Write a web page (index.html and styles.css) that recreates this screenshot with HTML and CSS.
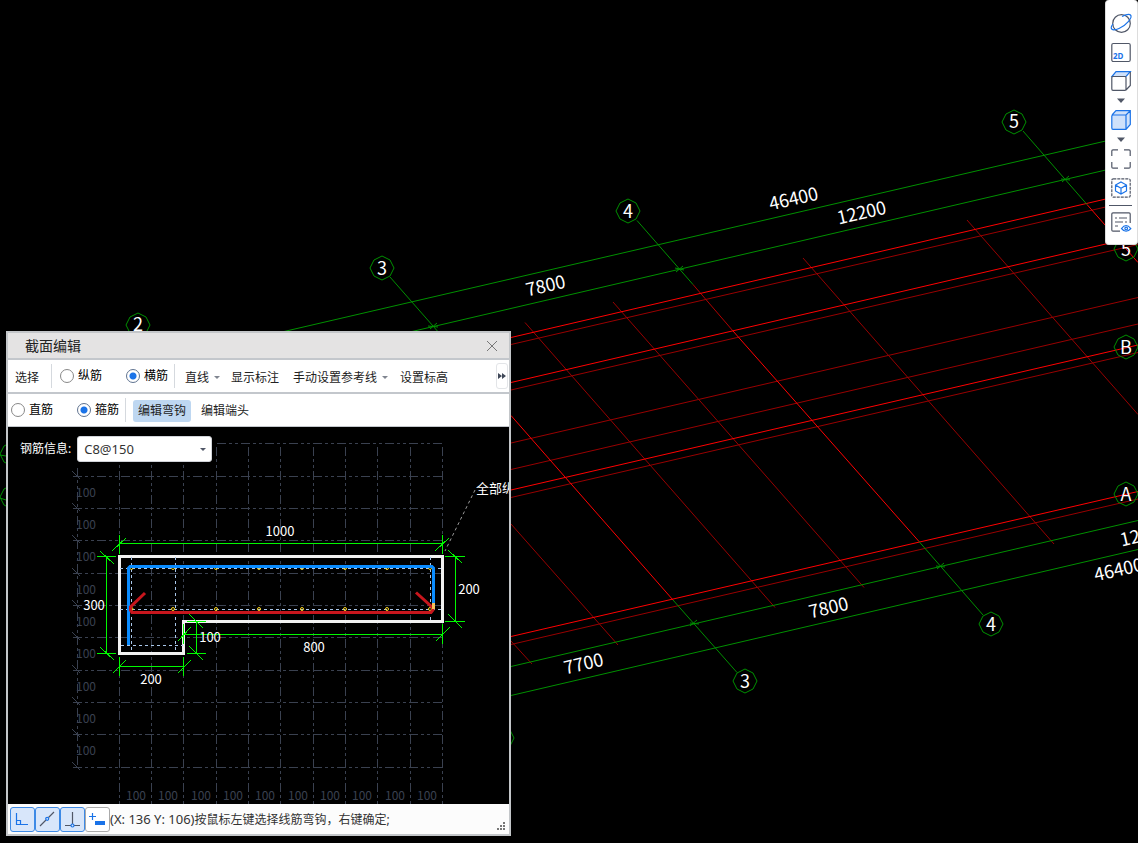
FILE: index.html
```html
<!DOCTYPE html>
<html lang="zh-CN">
<head>
<meta charset="utf-8">
<title>截面编辑</title>
<link rel="stylesheet" href="styles.css">
</head>
<body>
<main class="workspace">
  <svg class="model" role="img" aria-label="轴网">
    <defs>
      <path id="bubble" d="M0-12 8-8 12 0 8 8 0 12-8 8-12 0-8-8Z"/>
    </defs>
    <g class="beam">
      <path d="M511 344.5 1138 199.5M511 390 1138 244.500M511 443 1138 297.500M511 469.500 1138 324M511 497.500 1138 352.500M511 644.500 1138 499"/>
      <path d="M525 322.500 775 607.500M613 302 864 587.500M803 258 1054 544M967 220 1138 414.500M511 524 618 645M511 641 532 664"/>
    </g>
    <path class="beam-mid" d="M693 284.500 733 331"/>
    <path class="axis" d="M511 337.500 1138 191.500M511 382.500 1138 236.500M511 490 1138 345M511 636.500 1138 491.500M733 331 919 541.500M511 415.500 673 600M1087 204.500 1138 262.500"/>
    <path class="dim" d="M284 331.500 1138 133.500M412 331.500 1138 162.500M511 666.500 1138 520.500M511 695.500 1138 549.500M637 220.500 693 284.500M919 541.500 983 615M390 277 440 334M673 600 737 672.500M1023 131 1087 204.500M676 272 683 266M675 268 684 270M937 569 944 563M936 566 945 567M690 626 697 620M690 623 699 624M1062 182 1069 176M1061 179 1070 180M430 329 437 323M428 326 438 327M0 455 6 456M0 498 6 500"/>
    <g class="bubbles">
      <use href="#bubble" x="138" y="325"/>
      <use href="#bubble" x="382" y="268"/>
      <use href="#bubble" x="628" y="211"/>
      <use href="#bubble" x="1014" y="122"/>
      <use href="#bubble" x="1126" y="249"/>
      <use href="#bubble" x="1126" y="347"/>
      <use href="#bubble" x="1126" y="494"/>
      <use href="#bubble" x="745" y="681"/>
      <use href="#bubble" x="991" y="624"/>
      <use href="#bubble" x="502" y="738"/>
      <use href="#bubble" x="12" y="454"/>
      <use href="#bubble" x="12" y="497"/>
    </g>
    <g class="axis-text">
      <text x="138" y="331">2</text>
      <text x="382" y="275">3</text>
      <text x="628" y="218">4</text>
      <text x="1014" y="128">5</text>
      <text x="1126" y="256">5</text>
      <text x="1126" y="354">B</text>
      <text x="1126" y="501">A</text>
      <text x="745" y="688">3</text>
      <text x="991" y="631">4</text>
      <text transform="translate(547 292) rotate(-13)">7800</text>
      <text transform="translate(795 205) rotate(-13)">46400</text>
      <text transform="translate(863 219) rotate(-13)">12200</text>
      <text transform="translate(585 670) rotate(-13)">7700</text>
      <text transform="translate(830 614) rotate(-13)">7800</text>
      <text transform="translate(1146 541) rotate(-13)">12200</text>
      <text transform="translate(1120 576) rotate(-13)">46400</text>
    </g>
  </svg>

  <nav class="view-tools" aria-label="视图">
    <button class="tool" aria-label="动态观察"><svg viewBox="0 0 20 20"><circle class="ink" cx="10.500" cy="10.500" r="8.800"/><path class="blue" d="M2 11C-2 16 1 18.500 8 15.500 15 12.500 22 4.500 19.500 2 18 .500 14 2 11 3.500"/></svg></button>
    <button class="tool" aria-label="二维"><svg viewBox="0 0 20 20"><rect class="ink" x=".8" y="1.500" width="18.400" height="18" rx="1.500"/><text class="two-d" x="2" y="17">2D</text></svg></button>
    <button class="tool" aria-label="俯视"><svg viewBox="0 0 20 20"><path class="sky" d="M1 5.500 5 .700H19.300L15 5.500Z"/><path class="ink" d="M2 5.500H14Q15 5.500 15 6.500V18Q15 19.300 14 19.300H2Q.8 19.300 .8 18V6.500Q.8 5.500 2 5.500ZM19.300 1V14.500L15 19"/></svg></button>
    <button class="arrow" aria-label="俯视选项"><svg viewBox="0 0 8 5"><path d="M0 .500H8L4 5Z"/></svg></button>
    <button class="tool" aria-label="实体"><svg viewBox="0 0 20 20"><path class="solid" d="M1 5 5 .700H19.300V14.500L15 19.300H2Q.8 19.300 .8 18V6Q.8 5 2 5H15V19.300M15 5 19.300 .700"/></svg></button>
    <button class="arrow" aria-label="实体选项"><svg viewBox="0 0 8 5"><path d="M0 .500H8L4 5Z"/></svg></button>
    <button class="tool" aria-label="全屏"><svg viewBox="0 0 20 20"><path class="ink" d="M7 .800H2Q.8.800.8 2V7M13 .800H18Q19.200.800 19.200 2V7M19.200 13V18Q19.200 19.200 18 19.200H13M7 19.200H2Q.8 19.200.8 18V13"/></svg></button>
    <button class="tool" aria-label="局部三维"><svg viewBox="0 0 20 20"><rect class="ink dotted" x=".8" y=".8" width="18.400" height="18.400" rx="1.500"/><path class="blue" d="M10 4 15.500 7V13L10 16 4.500 13V7ZM4.500 7 10 10.300 15.500 7M10 10.300V16"/></svg></button>
    <hr class="tool-rule">
    <button class="tool" aria-label="显示设置"><svg viewBox="0 0 20 20"><path class="ink" d="M9 19.200H2Q.8 19.200.8 18V2Q.8.800 2 .800H18Q19.200.800 19.200 2V11M4 6H6M8 6H16M4 10H12M14 10H16M4 14H7"/><path class="blue" d="M10.500 16.500Q15 10.500 19.800 16.500 15 22 10.500 16.500Z"/><circle class="blue" cx="15.200" cy="16.500" r="1.300"/></svg></button>
  </nav>

  <section class="dialog" aria-label="截面编辑">
    <header class="title-bar">
      <h1>截面编辑</h1>
      <button class="close" aria-label="关闭"><svg viewBox="0 0 12 12"><path d="M1 1 11 11M11 1 1 11"/></svg></button>
    </header>
    <div class="bar main-bar">
      <button class="command">选择</button>
      <span class="rule"></span>
      <label class="choice"><input type="radio" name="bar-type">纵筋</label>
      <label class="choice"><input type="radio" name="bar-type" checked>横筋</label>
      <span class="rule"></span>
      <button class="command drop outlined">直线<i class="caret"></i></button>
      <button class="command">显示标注</button>
      <button class="command drop">手动设置参考线<i class="caret"></i></button>
      <button class="command">设置标高</button>
      <button class="more" aria-label="更多"><svg viewBox="0 0 8 6"><path d="M0 0 4 3 0 6ZM4 0 8 3 4 6Z"/></svg></button>
    </div>
    <div class="bar sub-bar">
      <label class="choice"><input type="radio" name="rebar">直筋</label>
      <label class="choice"><input type="radio" name="rebar" checked>箍筋</label>
      <span class="rule"></span>
      <button class="command selected">编辑弯钩</button>
      <button class="command">编辑端头</button>
    </div>
    <div class="canvas">
      <svg class="drawing" role="img" aria-label="截面">
        <g transform="translate(-8 -427)">
          <g class="grid">
            <path d="M119.500 447V804M151.500 447V804M183.500 447V804M216.500 447V804M248.500 447V804M280.500 447V804M313.500 447V804M345.500 447V804M377.500 447V804M410.500 447V804M442.500 447V804M77.500 468V768"/>
            <path d="M217 443.500H442M73 476.500H442M73 508.500H442M73 540.500H442M73 573.500H442M73 605.500H442M73 637.500H442M73 670.500H442M73 702.500H442M73 734.500H442M73 767.500H442"/>
          </g>
          <path class="ticks" d="M72 471 80 479M72 503 80 511M72 535 80 543M72 568 80 576M72 600 80 608M72 632 80 640M72 665 80 673M72 697 80 705M72 729 80 737M72 762 80 770"/>
          <g class="grid-text">
            <text x="86" y="497">100</text><text x="86" y="529">100</text><text x="86" y="561">100</text><text x="86" y="594">100</text><text x="86" y="626">100</text><text x="86" y="658">100</text><text x="86" y="691">100</text><text x="86" y="723">100</text><text x="86" y="755">100</text>
            <text x="136" y="800">100</text><text x="168" y="800">100</text><text x="201" y="800">100</text><text x="233" y="800">100</text><text x="265" y="800">100</text><text x="298" y="800">100</text><text x="330" y="800">100</text><text x="362" y="800">100</text><text x="395" y="800">100</text><text x="427" y="800">100</text>
          </g>
          <path class="outline" d="M119.500 556.500H442.500V621.500H183.500V653.500H119.500Z"/>
          <path class="guide" d="M120 568.500H442M120 609.500H442M121 645.500H183M131.500 557V653M175.500 557V653M430.500 557V622"/>
          <g class="dots">
            <circle cx="131.500" cy="568" r="1.500"/><circle cx="173" cy="568" r="1.500"/><circle cx="216" cy="568" r="1.500"/><circle cx="259" cy="568" r="1.500"/><circle cx="302" cy="568" r="1.500"/><circle cx="345" cy="568" r="1.500"/><circle cx="387" cy="568" r="1.500"/><circle cx="430" cy="568" r="1.500"/>
            <circle cx="131.500" cy="609" r="1.500"/><circle cx="173" cy="609" r="1.500"/><circle cx="216" cy="609" r="1.500"/><circle cx="259" cy="609" r="1.500"/><circle cx="302" cy="609" r="1.500"/><circle cx="345" cy="609" r="1.500"/><circle cx="387" cy="609" r="1.500"/><circle cx="430" cy="609" r="1.500"/>
          </g>
          <path class="bar-blue" d="M128.500 645V568L130 566.500H432L433.500 568V604"/>
          <path class="bar-red" d="M145 593 130.500 607V610L132 612.500H431L433 610V608L416 592.500"/>
          <path class="bar-amber" d="M433.500 603V609"/>
          <path class="measure" d="M119 543.500H443M119.500 535V554M442.500 535V554M112 551 126 538M435 551 449 538M106.500 556V654M97 556.500H116M97 653.500H116M100 551 114 564M100 647 114 660M119 666.500H184M119.500 657V676M183.500 657V676M113 673 126 660M178 673 191 660M183 634.500H443M183.500 624V644M442.500 624V644M178 641 191 627M436 641 450 627M196.500 621V654M187 621.500H206M187 653.500H206M189 614 203 628M189 646 203 660M455.500 556V622M445 556.500H465M445 621.500H465M448 550 462 563M448 614 462 628"/>
          <path class="leader" d="M475 490 445 551"/>
          <g class="measure-text">
            <text x="280" y="536">1000</text><text x="94" y="610">300</text><text x="151" y="684">200</text><text x="210" y="642">100</text><text x="314" y="652">800</text><text x="469" y="594">200</text>
          </g>
          <text class="note" x="476" y="493">全部纵筋</text>
        </g>
      </svg>
      <label class="rebar-info">钢筋信息:
        <span class="combo"><select><option>C8@150</option></select><i class="caret"></i></span>
      </label>
    </div>
    <footer class="status">
      <button class="snap on" aria-label="正交"><svg viewBox="0 0 23 23"><path class="blue" d="M5.500 5V16.500H17M5.500 12.500H9.500V16.500"/></svg></button>
      <button class="snap on" aria-label="极轴"><svg viewBox="0 0 23 23"><path class="ink" d="M4 18 10 12M12.500 9.500 18 4"/><circle class="blue" cx="11.200" cy="10.800" r="1.500"/></svg></button>
      <button class="snap on" aria-label="垂足"><svg viewBox="0 0 23 23"><path class="ink" d="M11.500 4V16M4 17.500H10M13 17.500H19"/><circle class="blue" cx="11.500" cy="17.500" r="1.500"/></svg></button>
      <button class="snap" aria-label="动态输入"><svg viewBox="0 0 23 23"><path class="blue" d="M3 8.500H10M6.500 5V12"/><rect class="fill-blue" x="9" y="13" width="10" height="4"/></svg></button>
      <span class="message"><span class="latin">(X: 136 Y: 106)</span>按鼠标左键选择线筋弯钩，右键确定;</span>
      <svg class="grip" viewBox="0 0 8 8"><path d="M6 0H8V2H6ZM3 3H5V5H3ZM6 3H8V5H6ZM0 6H2V8H0ZM3 6H5V8H3ZM6 6H8V8H6Z"/></svg>
    </footer>
  </section>
</main>
</body>
</html>
```

FILE: styles.css
```css
* { box-sizing: border-box; }
body {
  margin: 0;
  background: #000;
  color: #222;
  font: 12px/16px "Noto Sans", "Noto Sans CJK SC", sans-serif;
}
button {
  border: 0;
  padding: 0;
  background: none;
  color: inherit;
  font: inherit;
}
svg { display: block; fill: none; }
h1 { margin: 0; font-size: 14px; line-height: 20px; font-weight: 400; }

.workspace { position: relative; height: 100vh; min-height: 843px; overflow: hidden; }
.model { width: 100%; height: 100%; position: absolute; }
.beam { stroke: #980000; }
.beam-mid { stroke: #b00000; }
.axis { stroke: #f00; }
.dim, .bubbles { stroke: #009000; }
.axis-text { fill: #fff; font: 18px "Noto Sans CJK SC", sans-serif; text-anchor: middle; }

.view-tools {
  position: absolute;
  top: 0;
  right: 0;
  width: 33px;
  padding: 13px 2px 12px 0;
  display: flex;
  flex-direction: column;
  align-items: center;
  background: #fff;
  border: 1px solid #ddd;
  border-top: 0;
  border-radius: 4px;
}
.tool { width: 20px; height: 20px; margin-bottom: 9px; }
.tool:last-child { margin-bottom: 0; }
.tool svg { overflow: visible; }
.arrow { width: 8px; height: 5px; margin: -2px 0 7px; }
.arrow svg { fill: #505767; }
.tool-rule { width: 23px; margin: -2px 0 6px; border: 0; border-top: 1px solid #505767; }
.ink { stroke: #505767; stroke-width: 1.2; }
.blue { stroke: #1a73e8; stroke-width: 1.2; }
.sky { fill: #cfe1fa; stroke: #1a73e8; stroke-width: 1.2; }
.solid { fill: #cfe1fa; stroke: #1a73e8; stroke-width: 1.2; }
.dotted { stroke-dasharray: 3 1; }
.fill-blue { fill: #1a73e8; }
.two-d { fill: #1a73e8; font-size: 8px; font-weight: 700; }

.dialog {
  position: absolute;
  left: 6px;
  top: 331px;
  width: 505px;
  height: 505px;
  display: flex;
  flex-direction: column;
  border: 2px solid #c3c6c9;
  background: #fff;
}
.title-bar {
  height: 27px;
  padding: 0 11px 0 17px;
  display: flex;
  align-items: center;
  justify-content: space-between;
  background: #e4e3e3;
  border-bottom: 2px solid #c3c7cc;
}
.close { width: 12px; height: 12px; }
.close svg { stroke: #777; }
.bar {
  height: 34px;
  display: flex;
  align-items: center;
  border-bottom: 2px solid #c3c7cc;
  white-space: nowrap;
}
.main-bar { padding-left: 7px; }
.sub-bar { height: 33px; padding-left: 3px; border-bottom-width: 1px; }
.rule { width: 1px; height: 24px; background: #d5d9de; }
.choice { display: flex; align-items: center; gap: 4px; height: 20px; color: #000; }
.choice input {
  appearance: none;
  width: 14px;
  height: 14px;
  margin: 0;
  border: 1px solid #888;
  border-radius: 50%;
}
.choice input:checked {
  border-color: #5f7390;
  background: radial-gradient(circle, #1a73e8 3px, transparent 4px);
}
.choice + .choice { margin-left: 24px; }
.main-bar .rule + .choice { margin-left: 8px; }
.main-bar .rule { margin-left: 12px; }
.main-bar .choice + .rule { margin-left: 6px; }
.main-bar .command { padding-top: 3px; }
.sub-bar .rule { margin: 0 7px 0 6px; }
.sub-bar .command { height: 22px; margin-top: 2px; }
.drop { display: flex; align-items: center; gap: 5px; }
.caret {
  border: 3px solid transparent;
  border-top-color: #808590;
  border-bottom: 0;
}
.outlined { margin-left: 10px; margin-right: 11px; }
.outlined + .command { margin-right: 14px; }
.main-bar .drop + .command:nth-last-child(2) { margin-left: 12px; }
.more {
  display: flex;
  align-items: center;
  justify-content: center;
  width: 12px;
  height: 26px;
  margin: 0 1px 0 auto;
  border: 1px solid #e3e5e8;
  border-radius: 3px;
}
.more svg { width: 8px; height: 6px; fill: #404858; }
.selected { padding: 0 5px; margin-right: 10px; border-radius: 3px; background: #bed7f1; }

.canvas { position: relative; flex: 1; background: #000; overflow: hidden; }
.drawing { width: 100%; height: 100%; }
.rebar-info {
  position: absolute;
  top: 9px;
  left: 12px;
  display: flex;
  align-items: center;
  gap: 6px;
  color: #fff;
}
.combo { position: relative; display: block; width: 135px; }
.combo select {
  appearance: none;
  display: block;
  width: 100%;
  height: 26px;
  padding: 0 6px;
  border: 1px solid #d0d3d8;
  border-radius: 3px;
  background: #fff;
  color: #333;
  font: 13px/20px "Noto Sans", sans-serif;
}
.combo .caret { position: absolute; right: 6px; top: 12px; border-top-color: #505767; }
.grid { stroke: #3a4150; stroke-dasharray: 9 3 3 3 3 3; }
.ticks { stroke: #3a4150; }
.grid-text { fill: #3a4150; font: 12px "Noto Sans CJK SC", sans-serif; text-anchor: middle; }
.outline { stroke: #f2f2f2; stroke-width: 3; }
.guide { stroke: #a9c7ea; stroke-dasharray: 3 3; }
.dots { stroke: #f5d020; }
.bar-blue { stroke: #0a8cff; stroke-width: 3; }
.bar-red { stroke: #c8161d; stroke-width: 3; }
.bar-amber { stroke: #f5c15a; stroke-width: 3; }
.measure { stroke: #00f800; shape-rendering: crispEdges; }
.leader { stroke: #999; stroke-dasharray: 3 3; }
.measure-text { fill: #fff; font: 13px "Noto Sans CJK SC", sans-serif; text-anchor: middle; }
.note { fill: #fff; font-size: 13px; }

.status { display: flex; align-items: center; height: 30px; padding-left: 2px; background: #fcfcfc; color: #333; }
.snap { width: 25px; height: 25px; border: 1px solid #aaa; border-radius: 3px; background: #fff; }
.on { border-color: #3d8ae6; background: #d8e6fa; }
.message { flex: 1; white-space: nowrap; }
.latin { font-size: 13px; }
.grip { width: 8px; height: 8px; margin: 14px 4px 0 0; fill: #777; }
```
